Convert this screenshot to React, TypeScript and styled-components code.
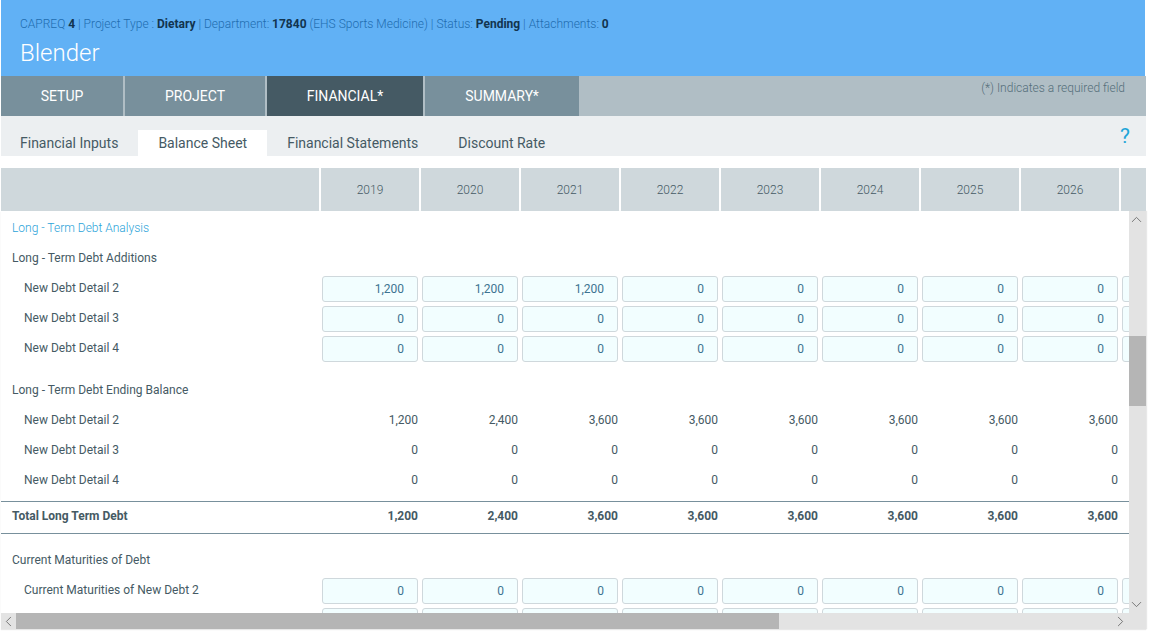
import React from "react";
import styled, { createGlobalStyle } from "styled-components";
import { ChevronUp, ChevronDown, ChevronLeft, ChevronRight } from "lucide-react";

const GlobalStyle = createGlobalStyle`
  html, body {
    margin: 0;
    padding: 0;
    height: 100%;
    background: #fff;
    overflow: hidden;
    font-family: Roboto, "Liberation Sans", sans-serif;
  }
`;

const Page = styled.div`
  width: 1145px;
  margin-left: 1px;
`;

const Header = styled.header`
  height: 76px;
  margin-right: 1px;
  box-sizing: border-box;
  padding: 16px 19px 0;
  background: #61b1f5;
  color: #1f6db0;
`;

const Meta = styled.div`
  font-size: 12px;
  font-weight: 300;
  line-height: 16px;
  white-space: nowrap;
  b {
    font-weight: 700;
    color: #12344f;
  }
`;

const Title = styled.h1`
  margin: 5px 0 0;
  font-size: 24px;
  font-weight: 300;
  line-height: 32px;
  color: #fff;
`;

const MainTabs = styled.nav`
  display: flex;
  height: 40px;
  background: #b0bec5;
`;

const MainTab = styled.div<{ $active?: boolean; $w: number }>`
  width: ${(p) => p.$w}px;
  margin-right: 2px;
  display: flex;
  align-items: center;
  justify-content: center;
  background: ${(p) => (p.$active ? "#455a64" : "#78909c")};
  color: #fff;
  font-size: 14px;
`;

const Required = styled.div`
  margin-left: auto;
  padding: 5px 21px 0 0;
  font-size: 12px;
  font-weight: 300;
  line-height: 14px;
  color: #546e7a;
`;

const SubTabs = styled.nav`
  position: relative;
  display: flex;
  align-items: flex-end;
  height: 40px;
  background: #eceff1;
`;

const SubTab = styled.div<{ $active?: boolean }>`
  height: 26px;
  padding: 0 20px;
  line-height: 27px;
  font-size: 14px;
  color: #455a64;
  background: ${(p) => (p.$active ? "#fff" : "transparent")};
  &:first-child {
    padding-left: 19px;
  }
`;

const Help = styled.span`
  position: absolute;
  right: 16px;
  top: 6px;
  font-size: 21px;
  line-height: 28px;
  color: #1ea5d8;
`;

const YearRow = styled.div`
  display: flex;
  height: 43px;
  margin-top: 12px;
  overflow: hidden;
`;

const YearCorner = styled.div`
  flex: 0 0 318px;
  margin-right: 2px;
  background: #cfd8dc;
`;

const YearCell = styled.div`
  flex: 0 0 98px;
  margin-right: 2px;
  display: flex;
  align-items: center;
  justify-content: center;
  background: #cfd8dc;
  font-size: 12px;
  font-weight: 300;
  color: #455a64;
`;

const Frame = styled.div`
  display: grid;
  grid-template-columns: 1128px 17px;
  grid-template-rows: 402px 16px;
  height: 418px;
  background: #e3e3e3;
  box-shadow: 0 1px 1px #e8e8e8, 1px 0 1px #e8e8e8;
`;

const Viewport = styled.div`
  overflow: hidden;
  background: #fff;
`;

const Row = styled.div<{ $h?: number; $mt?: number; $total?: boolean }>`
  display: flex;
  align-items: center;
  height: ${(p) => p.$h ?? 30}px;
  margin-top: ${(p) => p.$mt ?? 0}px;
  box-sizing: border-box;
  ${(p) => p.$total && "border-top: 1px solid #78909c; border-bottom: 1px solid #78909c;"}
`;

const Label = styled.div<{ $indent?: boolean; $kind?: "head" | "total" }>`
  flex: 0 0 320px;
  box-sizing: border-box;
  padding-left: ${(p) => (p.$indent ? 23 : 11)}px;
  margin-top: ${(p) => (p.$kind === "total" ? -3 : -1)}px;
  font-size: 12px;
  font-weight: ${(p) => (p.$kind === "total" ? 700 : p.$kind === "head" ? 300 : 400)};
  color: ${(p) => (p.$kind === "head" ? "#2ba3d9" : "#455a64")};
`;

const Value = styled.div<{ $bold?: boolean }>`
  flex: 0 0 100px;
  box-sizing: border-box;
  padding-right: 3px;
  text-align: right;
  font-size: 12px;
  font-weight: ${(p) => (p.$bold ? 700 : 400)};
  color: #455a64;
  ${(p) => p.$bold && "margin-top: -4px;"}
`;

const InputCell = styled.div`
  flex: 0 0 100px;
  box-sizing: border-box;
  padding: 0 3px 0 1px;
`;

const AmountInput = styled.input`
  display: block;
  width: 96px;
  height: 26px;
  margin-top: 1px;
  box-sizing: border-box;
  padding: 0 13px 0 0;
  border: 1px solid #cfd8dc;
  border-radius: 3px;
  background: #f2feff;
  text-align: right;
  font-family: inherit;
  font-size: 12px;
  color: #3d7391;
  outline: none;
`;

const ScrollV = styled.div`
  position: relative;
  background: #e3e3e3;
`;

const ThumbV = styled.div`
  position: absolute;
  left: 0;
  top: 125px;
  width: 17px;
  height: 70px;
  background: #b5b5b5;
`;

const ScrollH = styled.div`
  position: relative;
  background: #e3e3e3;
`;

const ThumbH = styled.div`
  position: absolute;
  left: 15px;
  top: 0;
  width: 763px;
  height: 16px;
  background: #b5b5b5;
`;

const ScrollCorner = styled.div`
  background: #e3e3e3;
`;

const Arrow = styled.span<{ $side: "top" | "bottom" | "left" | "right" }>`
  position: absolute;
  display: flex;
  color: #666;
  ${(p) => p.$side === "top" && "top: 0; left: -1px;"}
  ${(p) => p.$side === "bottom" && "bottom: 0; left: -1px;"}
  ${(p) => p.$side === "left" && "top: 0; left: -1px;"}
  ${(p) => p.$side === "right" && "top: 0; right: 0;"}
`;

const years = [2019, 2020, 2021, 2022, 2023, 2024, 2025, 2026];

type Line =
  | { kind: "head" | "sub"; label: string; mt?: number }
  | { kind: "input" | "value" | "total"; label: string; values: string[]; mt?: number };

const fill = (a: string, b: string, c: string, rest = c): string[] => [
  a, b, c, rest, rest, rest, rest, rest,
];
const zeros = fill("0", "0", "0");

const lines: Line[] = [
  { kind: "head", label: "Long - Term Debt Analysis", mt: 2 },
  { kind: "sub", label: "Long - Term Debt Additions" },
  { kind: "input", label: "New Debt Detail 2", values: fill("1,200", "1,200", "1,200", "0") },
  { kind: "input", label: "New Debt Detail 3", values: zeros },
  { kind: "input", label: "New Debt Detail 4", values: zeros },
  { kind: "sub", label: "Long - Term Debt Ending Balance", mt: 12 },
  { kind: "value", label: "New Debt Detail 2", values: fill("1,200", "2,400", "3,600") },
  { kind: "value", label: "New Debt Detail 3", values: zeros },
  { kind: "value", label: "New Debt Detail 4", values: zeros },
  { kind: "total", label: "Total Long Term Debt", values: fill("1,200", "2,400", "3,600") },
  { kind: "sub", label: "Current Maturities of Debt", mt: 11 },
  { kind: "input", label: "Current Maturities of New Debt 2", values: zeros },
  { kind: "input", label: "", values: zeros },
];

function renderLine(line: Line, i: number) {
  if (line.kind === "head" || line.kind === "sub") {
    return (
      <Row key={i} $mt={line.mt}>
        <Label $kind={line.kind === "head" ? "head" : undefined}>{line.label}</Label>
      </Row>
    );
  }
  if (line.kind === "total") {
    return (
      <Row key={i} $total $h={33} $mt={6}>
        <Label $kind="total">{line.label}</Label>
        {line.values.map((v, j) => (
          <Value key={j} $bold>{v}</Value>
        ))}
      </Row>
    );
  }
  return (
    <Row key={i}>
      <Label $indent>{line.label}</Label>
      {line.values.map((v, j) =>
        line.kind === "input" ? (
          <InputCell key={j}>
            <AmountInput readOnly value={v} />
          </InputCell>
        ) : (
          <Value key={j}>{v}</Value>
        )
      )}
      {line.kind === "input" && (
        <InputCell>
          <AmountInput readOnly value="" />
        </InputCell>
      )}
    </Row>
  );
}

export default function App() {
  return (
    <Page>
      <GlobalStyle />
      <Header>
        <Meta>
          CAPREQ <b>4</b> | Project Type : <b>Dietary</b> | Department: <b>17840</b> (EHS Sports
          Medicine) | Status: <b>Pending</b> | Attachments: <b>0</b>
        </Meta>
        <Title>Blender</Title>
      </Header>
      <MainTabs>
        <MainTab $w={122}>SETUP</MainTab>
        <MainTab $w={140}>PROJECT</MainTab>
        <MainTab $w={156} $active>FINANCIAL*</MainTab>
        <MainTab $w={154}>SUMMARY*</MainTab>
        <Required>(*) Indicates a required field</Required>
      </MainTabs>
      <SubTabs>
        <SubTab>Financial Inputs</SubTab>
        <SubTab $active>Balance Sheet</SubTab>
        <SubTab>Financial Statements</SubTab>
        <SubTab>Discount Rate</SubTab>
        <Help>?</Help>
      </SubTabs>
      <YearRow>
        <YearCorner />
        {years.map((y) => (
          <YearCell key={y}>{y}</YearCell>
        ))}
        <YearCell />
      </YearRow>
      <Frame>
        <Viewport>{lines.map(renderLine)}</Viewport>
        <ScrollV>
          <Arrow $side="top"><ChevronUp size={17} strokeWidth={1.2} /></Arrow>
          <ThumbV />
          <Arrow $side="bottom"><ChevronDown size={17} strokeWidth={1.2} /></Arrow>
        </ScrollV>
        <ScrollH>
          <Arrow $side="left"><ChevronLeft size={17} strokeWidth={1.2} /></Arrow>
          <ThumbH />
          <Arrow $side="right"><ChevronRight size={17} strokeWidth={1.2} /></Arrow>
        </ScrollH>
        <ScrollCorner />
      </Frame>
    </Page>
  );
}
